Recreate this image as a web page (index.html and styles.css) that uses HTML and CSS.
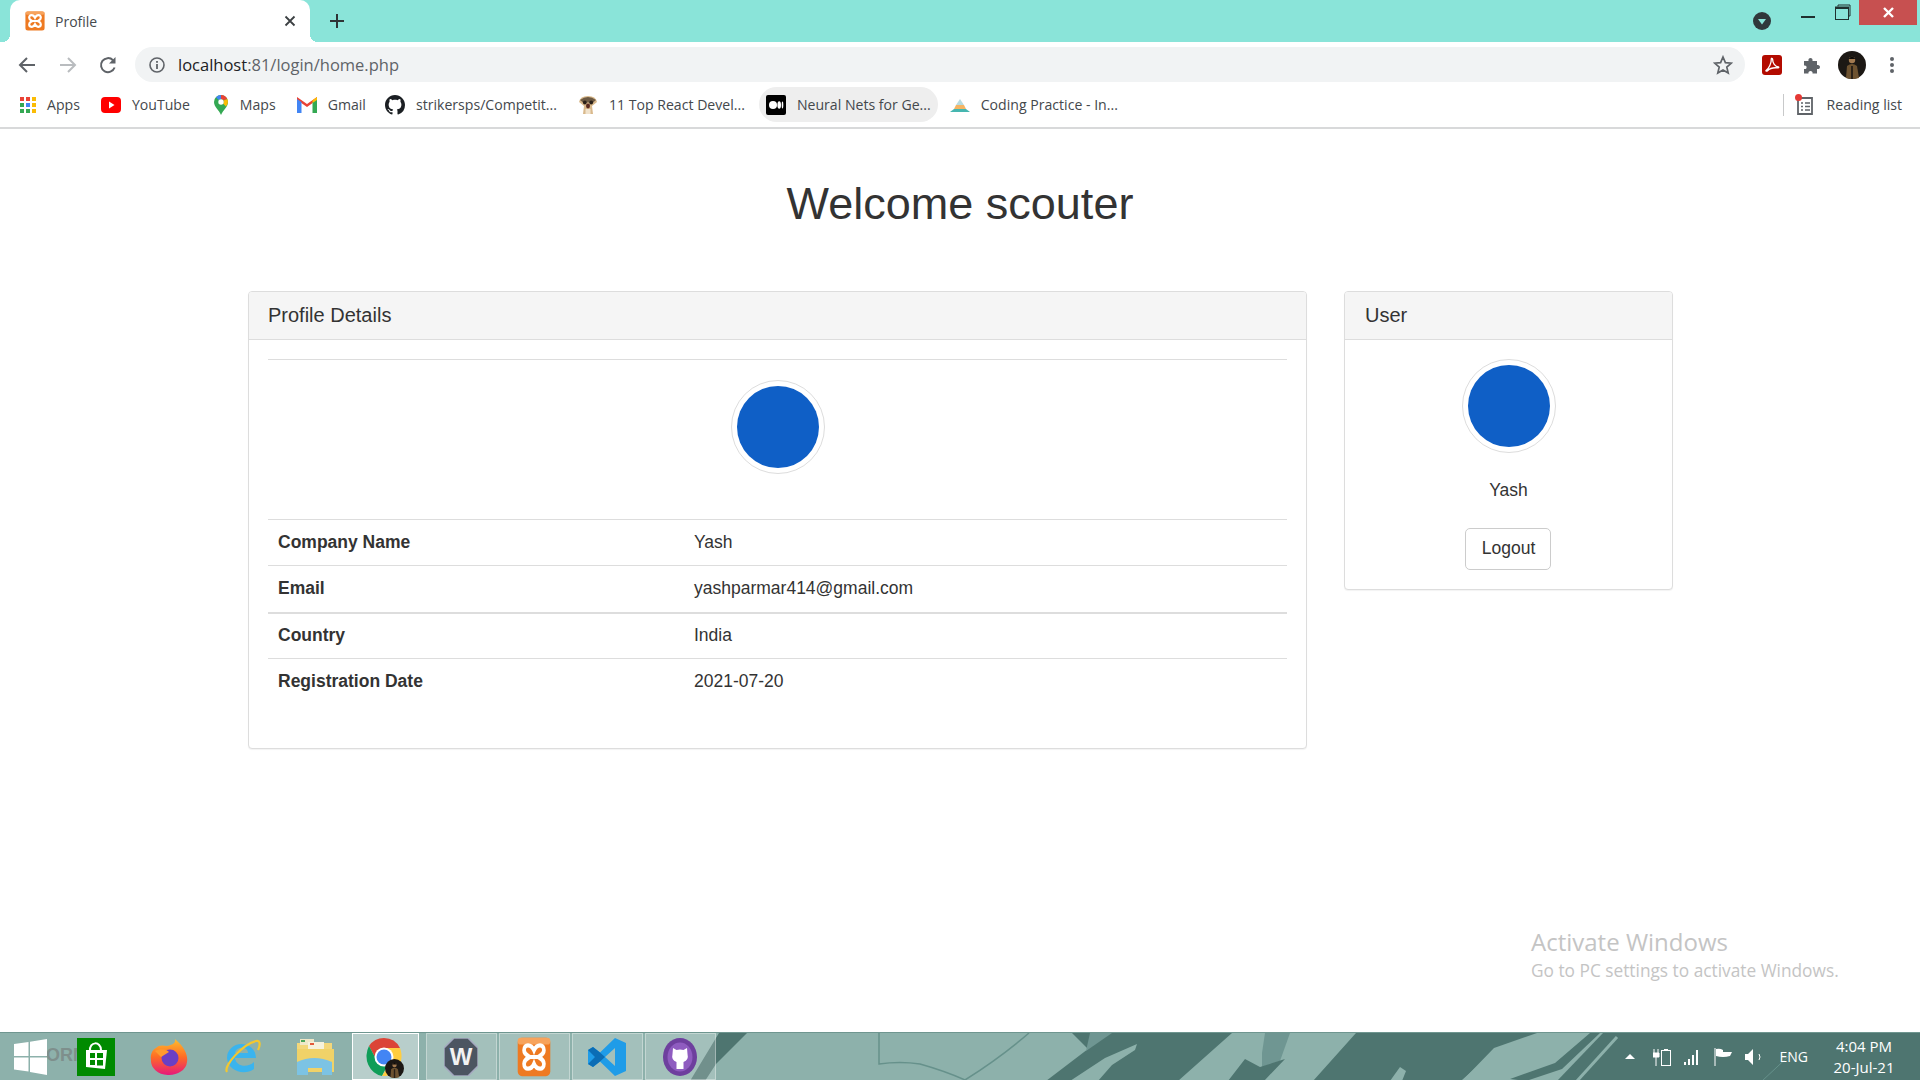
FILE: index.html
```html
<!DOCTYPE html>
<html lang="en">
<head>
    <meta charset="UTF-8">
    <meta name="viewport" content="width=device-width, initial-scale=1.0">
    <title>Profile</title>
    <link rel="stylesheet" href="styles.css">
</head>
<body>
    <svg class="defs" width="0" height="0">
        <symbol id="xampp" viewBox="0 0 24 24">
            <rect x="0.5" y="0.5" width="23" height="23" rx="3" fill="#ee7a22"/>
            <rect x="0.5" y="0.5" width="23" height="4" rx="2" fill="#f7a35c"/>
            <path d="M12 8 C10 4 5 4 5 8 C5 10.5 7 11 9 12 C7 13 5 13.5 5 16 C5 20 10 20 12 16 C14 20 19 20 19 16 C19 13.5 17 13 15 12 C17 11 19 10.5 19 8 C19 4 14 4 12 8 Z" fill="none" stroke="#fff" stroke-width="2.6"/>
            <rect x="9" y="10.8" width="6" height="2.4" fill="#fff"/>
        </symbol>
        <symbol id="portrait" viewBox="0 0 28 28">
            <circle cx="14" cy="14" r="14" fill="#1c1814"/>
            <path d="M8 27 L9 15 Q14 11 19 15 L21 27 Q14 29 8 27 Z" fill="#6d5230"/>
            <path d="M13 15 L15 15 L15 28 L13 28 Z" fill="#2a2118"/>
            <circle cx="14" cy="9" r="3.200" fill="#a27a50"/>
            <path d="M10.500 8 Q14 3 17.500 8 Z" fill="#0e0b08"/>
        </symbol>
    </svg>

    <header class="chrome">
        <div class="tabstrip">
            <div class="tab">
                <svg class="favicon" width="20" height="20"><use href="#xampp"/></svg>
                <span class="tab-title">Profile</span>
                <svg class="tab-close" width="12" height="12" viewBox="0 0 12 12"><path d="M1.5 1.5 L10.5 10.5 M10.5 1.5 L1.5 10.5" stroke="#3c4043" stroke-width="1.8"/></svg>
            </div>
            <svg class="new-tab" width="16" height="16" viewBox="0 0 16 16"><path d="M8 1 V15 M1 8 H15" stroke="#2e3436" stroke-width="2"/></svg>
            <svg class="tab-search" width="18" height="18" viewBox="0 0 18 18"><circle cx="9" cy="9" r="9" fill="#30383b"/><path d="M5 7 H13 L9 12.5 Z" fill="#8ae4d9"/></svg>
            <div class="win-controls">
                <svg class="win-btn" width="14" height="4" viewBox="0 0 14 4"><rect y="1" width="14" height="2" fill="#20302f"/></svg>
                <svg class="win-btn win-restore" width="16" height="16" viewBox="0 0 16 16"><path d="M3 2.5 V1 H15 V12 H13.5" fill="none" stroke="#20302f"/><rect x="0.5" y="3" width="13" height="12.5" fill="none" stroke="#20302f"/><rect x="1" y="3" width="12" height="2" fill="#20302f"/></svg>
                <div class="win-close">
                    <svg width="11" height="11" viewBox="0 0 11 11"><path d="M1 1 L10 10 M10 1 L1 10" stroke="#fff" stroke-width="2.4"/></svg>
                </div>
            </div>
        </div>

        <div class="toolbar">
            <svg class="nav-btn" width="18" height="18" viewBox="0 0 18 18"><path d="M17 9 H2.5 M9 2 L2 9 L9 16" fill="none" stroke="#5f6368" stroke-width="2"/></svg>
            <svg class="nav-btn" width="18" height="18" viewBox="0 0 18 18"><path d="M1 9 H15.5 M9 2 L16 9 L9 16" fill="none" stroke="#b9bcbf" stroke-width="2"/></svg>
            <svg class="nav-btn nav-reload" width="18" height="18" viewBox="0 0 18 18"><path d="M15.6 11.5 A7 7 0 1 1 14 4.2" fill="none" stroke="#5f6368" stroke-width="2"/><path d="M16.5 1 V7.5 H10 Z" fill="#5f6368"/></svg>
            <div class="omnibox">
                <svg class="info" width="16" height="16" viewBox="0 0 16 16"><circle cx="8" cy="8" r="7" fill="none" stroke="#5f6368" stroke-width="1.6"/><rect x="7.1" y="7" width="1.8" height="5" fill="#5f6368"/><rect x="7.1" y="4" width="1.8" height="1.8" fill="#5f6368"/></svg>
                <span class="url"><span class="url-host">localhost</span>:81/login/home.php</span>
                <svg class="star" width="20" height="20" viewBox="0 0 20 20"><path d="M10 2 L12.4 7.6 L18.4 8.1 L13.8 12.1 L15.2 18 L10 14.9 L4.8 18 L6.2 12.1 L1.6 8.1 L7.6 7.6 Z" fill="none" stroke="#5f6368" stroke-width="1.7"/></svg>
            </div>
            <svg class="ext-pdf" width="20" height="20" viewBox="0 0 20 20"><rect width="20" height="20" rx="3" fill="#b30b00"/><path d="M4 15.5 C7 13.5 9.5 8 9.3 4 C9.2 3 10.6 3 10.6 4.2 C10.6 8 13 11.5 16.5 12 C17 12.1 16.8 13 16 12.9 C12 12.4 8 13 5.5 15.8 C4.7 16.6 3.6 16 4 15.5 Z" fill="none" stroke="#fff" stroke-width="1.3"/></svg>
            <svg class="ext-puzzle" width="20" height="20" viewBox="0 0 20 20"><path d="M2 6 H6.5 C5.5 2 11.5 2 10.5 6 H15 V10 C19 9 19 15 15 14 V18.5 H10.5 C11.5 15 5.5 15 6.5 18.5 H2 V14 C5.5 15 5.5 9.500 2 10.500 Z" fill="#5f6368"/></svg>
            <svg class="profile-pic" width="28" height="28"><use href="#portrait"/></svg>
            <svg class="menu-dots" width="4" height="18" viewBox="0 0 4 18"><circle cx="2" cy="3" r="2" fill="#5f6368"/><circle cx="2" cy="9" r="2" fill="#5f6368"/><circle cx="2" cy="15" r="2" fill="#5f6368"/></svg>
        </div>

        <nav class="bookmarks">
            <a class="bookmark">
                <svg width="16" height="16" viewBox="0 0 16 16">
                    <rect x="0" y="0" width="4" height="4" fill="#ea4335"/><rect x="6" y="0" width="4" height="4" fill="#ea4335"/><rect x="12" y="0" width="4" height="4" fill="#fbbc05"/>
                    <rect x="0" y="6" width="4" height="4" fill="#34a853"/><rect x="6" y="6" width="4" height="4" fill="#4285f4"/><rect x="12" y="6" width="4" height="4" fill="#fbbc05"/>
                    <rect x="0" y="12" width="4" height="4" fill="#34a853"/><rect x="6" y="12" width="4" height="4" fill="#34a853"/><rect x="12" y="12" width="4" height="4" fill="#fbbc05"/>
                </svg>
                Apps
            </a>
            <a class="bookmark">
                <svg width="20" height="16" viewBox="0 0 20 16"><rect width="20" height="16" rx="4" fill="#f00"/><path d="M8 4.500 L13.500 8 L8 11.500 Z" fill="#fff"/></svg>
                YouTube
            </a>
            <a class="bookmark bookmark-maps">
                <svg width="16" height="20" viewBox="0 0 16 20"><path d="M8 20 C6 15 1 12 1 7 A7 7 0 0 1 15 7 C15 12 10 15 8 20 Z" fill="#34a853"/><path d="M3 2.200 A7 7 0 0 1 8 0 L8 4 A3 3 0 0 0 5.700 5 Z" fill="#4285f4"/><path d="M8 0 A7 7 0 0 1 14.300 4 L10.500 5.500 A3 3 0 0 0 8 4 Z" fill="#ea4335"/><path d="M14.300 4 A7 7 0 0 1 13 11.500 L10 8.500 A3 3 0 0 0 10.500 5.500 Z" fill="#fbbc05"/><circle cx="8" cy="7" r="2.700" fill="#fff"/></svg>
                Maps
            </a>
            <a class="bookmark bookmark-gmail">
                <svg width="20" height="16" viewBox="0 0 20 16"><path d="M0 3 L10 10 L20 3 V0 L10 7 L0 0 Z" fill="#ea4335"/><path d="M0 2 V16 H4.500 V5 Z" fill="#4285f4"/><path d="M20 2 V16 H15.500 V5 Z" fill="#34a853"/><path d="M20 0 L15.500 3.200 V6 L20 3 Z" fill="#fbbc05"/></svg>
                Gmail
            </a>
            <a class="bookmark">
                <svg width="20" height="20" viewBox="0 0 16 16"><path d="M8 0C3.580 0 0 3.580 0 8c0 3.540 2.290 6.530 5.470 7.590.4.070.55-.17.55-.38 0-.19-.01-.82-.01-1.490-2.010.37-2.530-.49-2.690-.94-.09-.23-.48-.94-.82-1.130-.28-.15-.68-.52-.01-.53.63-.01 1.080.58 1.230.82.720 1.210 1.870.870 2.330.660.070-.520.280-.870.510-1.070-1.780-.2-3.640-.89-3.640-3.950 0-.870.310-1.590.820-2.150-.080-.2-.360-1.020.080-2.120 0 0 .670-.210 2.200.820.640-.180 1.320-.270 2-.270s1.360.090 2 .270c1.530-1.040 2.200-.820 2.200-.820.440 1.100.160 1.920.080 2.120.510.560.820 1.270.820 2.150 0 3.070-1.870 3.750-3.650 3.950.290.250.540.730.540 1.480 0 1.070-.010 1.930-.010 2.200 0 .210.150.460.550.380A8.010 8.010 0 0 0 16 8c0-4.420-3.580-8-8-8z" fill="#1b1f23"/></svg>
                strikersps/Competit...
            </a>
            <a class="bookmark">
                <svg width="20" height="20" viewBox="0 0 20 20"><path d="M5 19 L6 11 L1 7 Q2 1 10 1 Q18 1 19 7 L14 11 L15 19 Z" fill="#d9b98c"/><path d="M2 5 Q10 -1 18 5 L15 7.500 H5 Z" fill="#6d5a43"/><circle cx="6.800" cy="7.500" r="1.900" fill="#2a211a"/><circle cx="13.200" cy="7.500" r="1.900" fill="#2a211a"/><ellipse cx="10" cy="11" rx="2" ry="2.400" fill="#5a2a20"/><path d="M7.500 19 V14 H12.500 V19 Z" fill="#f1e3cd"/></svg>
                11 Top React Devel...
            </a>
            <a class="bookmark bookmark-active">
                <svg width="20" height="20" viewBox="0 0 20 20"><rect width="20" height="20" rx="2" fill="#000"/><ellipse cx="7" cy="10" rx="4" ry="4" fill="#fff"/><ellipse cx="13.200" cy="10" rx="1.800" ry="3.800" fill="#fff"/><ellipse cx="16.500" cy="10" rx="0.800" ry="3.400" fill="#fff"/></svg>
                Neural Nets for Ge...
            </a>
            <a class="bookmark">
                <svg width="20" height="16" viewBox="0 0 20 16"><path d="M10 2 L14 8 H6 Z" fill="#b9dbe0"/><path d="M6 8 H14 L16 12 H4 Z" fill="#f5b563"/><path d="M4 12 H16 L20 15 H0 Z" fill="#46b6b0"/></svg>
                Coding Practice - In...
            </a>
            <div class="reading-list">
                <svg width="20" height="22" viewBox="0 0 20 22"><path d="M3 4 H17 V20 H3 Z" fill="none" stroke="#5f6368" stroke-width="1.800"/><path d="M6 9 H8 M10 9 H15 M6 12.500 H8 M10 12.500 H15 M6 16 H8 M10 16 H15" stroke="#5f6368" stroke-width="1.500"/><circle cx="3.500" cy="3.500" r="3.500" fill="#e53935"/></svg>
                Reading list
            </div>
        </nav>
    </header>

    <main class="page">
        <h1 class="welcome">Welcome scouter</h1>
        <div class="panels">
            <section class="panel panel-profile">
                <div class="panel-heading">Profile Details</div>
                <div class="panel-body">
                    <hr class="rule">
                    <div class="avatar avatar-profile"><div class="avatar-fill"></div></div>
                    <table class="details">
                        <tr><th>Company Name</th><td>Yash</td></tr>
                        <tr class="row-email"><th>Email</th><td>yashparmar414@gmail.com</td></tr>
                        <tr class="row-thick"><th>Country</th><td>India</td></tr>
                        <tr><th>Registration Date</th><td>2021-07-20</td></tr>
                    </table>
                </div>
            </section>
            <section class="panel panel-user">
                <div class="panel-heading">User</div>
                <div class="panel-body user-body">
                    <div class="avatar"><div class="avatar-fill"></div></div>
                    <div class="user-name">Yash</div>
                    <button class="btn-logout">Logout</button>
                </div>
            </section>
        </div>
        <div class="activate">
            <div class="activate-title">Activate Windows</div>
            <div class="activate-sub">Go to PC settings to activate Windows.</div>
        </div>
    </main>

    <footer class="taskbar">
        <svg class="wallpaper" width="1920" height="48" viewBox="0 0 1920 48" preserveAspectRatio="none">
            <polygon points="719,0 747,0 716,31 705,48 690,48" fill="#4e7570"/>
            <path d="M879 0 L879 31 Q900 28 920 31 Q945 38 965 47 Q1000 25 1029 0" fill="none" stroke="#66918b" stroke-width="1.500"/>
            <polygon points="1072,0 1232,0 1178,48 1046,48 1088,16" fill="#4e7570"/>
            <polygon points="1090,0 1112,0 1086,18" fill="#6f9692"/>
            <polygon points="1137,11 1135,17 1112,32 1098,48 1070,48 1105,25" fill="#8db1ab"/>
            <polygon points="1265,0 1290,0 1280,28 1262,34 1262,20" fill="#6f9692"/>
            <polygon points="1245,26 1260,34 1285,26 1264,48 1228,48" fill="#4e7570"/>
            <polygon points="1356,0 1537,0 1494,15 1462,48 1313,48" fill="#4e7570"/>
            <polygon points="1400,34 1406,38 1402,48 1390,48" fill="#8db1ab"/>
            <polygon points="1603,0 1920,0 1920,48 1557,48" fill="#4e7570"/>
            <polygon points="1510,46 1555,30 1590,0 1600,0 1562,36 1526,48" fill="#4e7570"/>
            <path d="M1463 48 L1500 15" stroke="#8db1ab" stroke-width="3"/>
            <path d="M1577 48 L1617 4" stroke="#8db1ab" stroke-width="3"/>
            <path d="M1762 48 L1792 20" stroke="#66918b" stroke-width="1"/>
        </svg>
        <span class="ghost-text">ORM</span>
        <svg class="start-logo" width="33" height="36" viewBox="0 0 33 36"><path d="M0 5 L14.500 3 V17 H0 Z M16 2.800 L33 0 V17 H16 Z M0 18.500 H14.500 V32.500 L0 30.500 Z M16 18.500 H33 V36 L16 33 Z" fill="#fff"/></svg>
        <svg class="store" width="38" height="38" viewBox="0 0 38 38"><rect width="38" height="38" fill="#008a00"/><path d="M9 12 H30 L28 31 L9 29 Z" fill="#fff"/><path d="M13 13 C12 3 24 3 24 12" fill="none" stroke="#fff" stroke-width="2"/><path d="M13 15 H18 V20 H13 Z M20 15 H26 V20 H20 Z M13 22 H18 V27 H13 Z M20 22 H26 V27.500 H20 Z" fill="#008a00"/></svg>
        <svg class="tb-firefox" width="38" height="38" viewBox="0 0 38 38">
            <defs>
                <linearGradient id="fxg" x1="0" y1="0" x2="0" y2="1"><stop offset="0" stop-color="#ffbd2e"/><stop offset="0.5" stop-color="#ff6b24"/><stop offset="1" stop-color="#e5197c"/></linearGradient>
            </defs>
            <path d="M25 1 C36 10 38 19 37 24 A18 14 0 0 1 1 22 C0 16 3 11 6 10 C8 7 13 7 17 8 C21 7 26 6 25 1 Z" fill="url(#fxg)"/>
            <circle cx="20" cy="20" r="8.500" fill="#6a3fc4"/>
            <path d="M5 13 C10 10 17 11 19 14 L11 19 Z" fill="#ff9a2e"/>
        </svg>
        <svg class="tb-ie" width="38" height="38" viewBox="0 0 38 38">
            <path d="M4 20 A14.500 14 0 0 1 33 20 H12 C13 29 25 30 31 24 V31 C21 38 5 33 4 20 Z M12 15 H25 C25 8 13 8 12 15 Z" fill="#3ab4ee" fill-rule="evenodd"/>
            <path d="M4 34 C0 28 20 6 33 3 C38 2 37 8 35 12" fill="none" stroke="#f3c72e" stroke-width="2.200"/>
        </svg>
        <svg class="tb-explorer" width="38" height="38" viewBox="0 0 38 38">
            <path d="M1 5 H36 V34 H1 Z" fill="#f3d77a"/>
            <path d="M4 1 H18 V7 H4 Z" fill="#efe8c8"/><rect x="12" y="4" width="16" height="7" fill="#f6f2dc"/><rect x="14" y="5" width="4" height="2" fill="#e25a3a"/><rect x="5" y="2" width="4" height="2" fill="#4ca85a"/>
            <path d="M1 11 H38 V34 H1 Z" fill="#f0d268"/>
            <path d="M1 24 Q18 16 36 24 V37 H26 V30 H12 V37 H1 Z" fill="#7cc3e4"/>
        </svg>
        <div class="tb-btn tb-btn-active">
            <svg width="38" height="42" viewBox="0 0 38 42">
                <path d="M18 2 A18 18 0 0 1 34 12 H18 Z" fill="#db4437"/><path d="M18 2 A18 18 0 0 0 3 10 L10 23 L18 12 Z" fill="#db4437"/>
                <path d="M3 10 A18 20 0 0 0 16 40 L22 28 L10 23 Z" fill="#0f9d58"/>
                <path d="M34 12 A18 20 0 0 1 16 40 L26 24 L18 12 Z" fill="#ffcd40"/>
                <circle cx="18" cy="21" r="9.500" fill="#fff"/><circle cx="18" cy="21" r="7.500" fill="#4285f4"/>
                <use href="#portrait" x="19" y="23" width="19" height="19"/>
            </svg>
        </div>
        <div class="tb-btn">
            <svg width="34" height="38" viewBox="0 0 34 38"><path d="M10 0 H24 L34 10 V28 L24 38 H10 L0 28 V10 Z" fill="#4c5561" stroke="#a4a8bf" stroke-width="1.500"/><text x="17" y="27" text-anchor="middle" class="wamp-w">W</text></svg>
        </div>
        <div class="tb-btn">
            <svg width="34" height="40" viewBox="0 0 24 24" preserveAspectRatio="none"><use href="#xampp"/></svg>
        </div>
        <div class="tb-btn">
            <svg width="38" height="38" viewBox="0 0 38 38"><path d="M27 0 L38 5 V33 L27 38 L12 23.500 L5 29 L0 26 V12 L5 9 L12 14.500 Z M27 10 L17 19 L27 28 Z" fill="#1f9ce8" fill-rule="evenodd"/><path d="M12 14.500 L5 9 L0 12 L7 19 L0 26 L5 29 L12 23.500 L17 19 Z" fill="#0b6db5"/></svg>
        </div>
        <div class="tb-btn">
            <svg width="34" height="38" viewBox="0 0 34 38"><ellipse cx="17" cy="19" rx="17" ry="19" fill="#6e3f9e"/><ellipse cx="17" cy="19" rx="12.500" ry="14.500" fill="#8f5cc0"/><path d="M10 10 L13.500 12 Q17 11 20.500 12 L24 10 L24.500 16 Q26 22 20.500 24 V31 H13.500 V24 Q8 22 9.500 16 Z" fill="#fff"/></svg>
        </div>

        <div class="tray">
            <svg class="tray-arrow" width="10" height="5" viewBox="0 0 10 5"><path d="M0 5 L5 0 L10 5 Z" fill="#fff"/></svg>
            <svg class="tray-power" width="18" height="18" viewBox="0 0 18 18"><path d="M1 1 V5 M5 1 V5 M0 5 H6 V9 H0 Z M3 9 V18" stroke="#fff" fill="#fff" stroke-width="1"/><rect x="8.500" y="2.500" width="9" height="15" fill="none" stroke="#fff"/><rect x="11" y="1" width="4" height="2" fill="#fff"/></svg>
            <svg class="tray-signal" width="16" height="16" viewBox="0 0 16 16"><rect x="0" y="13" width="2" height="3" fill="#fff"/><rect x="4" y="10" width="2" height="6" fill="#fff"/><rect x="8" y="6" width="2" height="10" fill="#fff"/><rect x="12" y="1" width="2" height="15" fill="#fff"/></svg>
            <svg class="tray-flag" width="18" height="18" viewBox="0 0 18 18"><path d="M1 0 V18" stroke="#fff"/><path d="M2 1 Q6 0 9 2 V4 L18 4 L16 8 Q9 10 2 8 Z" fill="#fff"/></svg>
            <svg class="tray-sound" width="18" height="18" viewBox="0 0 18 18"><path d="M0 6 H3 L8 1 V17 L3 12 H0 Z" fill="#fff"/><path d="M14 6 Q16 9 14 12" fill="none" stroke="#fff"/></svg>
            <span class="tray-lang">ENG</span>
            <div class="clock">
                <div>4:04 PM</div>
                <div>20-Jul-21</div>
            </div>
        </div>
    </footer>
</body>
</html>
```

FILE: styles.css
```css
* {
    box-sizing: border-box;
}

html, body {
    height: 100%;
}

body {
    margin: 0;
    display: flex;
    flex-direction: column;
    height: 1080px;
    overflow: hidden;
    font-family: "Liberation Sans", Arial, sans-serif;
    color: #333;
    background-color: #fff;
}

.defs {
    position: absolute;
}

/* browser top */
.chrome {
    font-family: "Open Sans", "Noto Sans", sans-serif;
    border-bottom: 2px solid #d8d9da;
}

.tabstrip {
    display: flex;
    align-items: flex-start;
    height: 42px;
    background-color: #8ae4d9;
    padding-left: 10px;
}

.tab {
    position: relative;
    display: flex;
    align-items: center;
    width: 300px;
    height: 42px;
    padding-left: 15px;
    background-color: #fff;
    border-radius: 10px 10px 0 0;
}

/* little flares at the foot of the active tab */
.tab::before, .tab::after {
    content: "";
    position: absolute;
    bottom: 0;
    width: 8px;
    height: 8px;
}

.tab::before {
    left: -8px;
    background: radial-gradient(circle at 0 0, transparent 8px, #fff 8px);
}

.tab::after {
    right: -8px;
    background: radial-gradient(circle at 100% 0, transparent 8px, #fff 8px);
}

.tab-title {
    margin-left: 10px;
    font-size: 14px;
    color: #45494d;
}

.tab-close {
    margin-left: auto;
    margin-right: 14px;
}

.new-tab {
    margin-left: 19px;
    margin-top: 13px;
}

.tab-search {
    margin-left: auto;
    margin-top: 12px;
}

.win-controls {
    display: flex;
    margin-left: 30px;
    margin-right: 3px;
}

.win-btn {
    margin-top: 15px;
}

.win-restore {
    margin-top: 4px;
    margin-left: 20px;
}

.win-close {
    display: flex;
    align-items: center;
    justify-content: center;
    width: 58px;
    height: 25px;
    margin-left: 8px;
    background-color: #c75050;
}

.toolbar {
    display: flex;
    align-items: center;
    height: 45px;
    padding: 0 0 0 18px;
    background-color: #fff;
}

.nav-btn {
    margin-right: 23px;
}

.nav-reload {
    margin-left: -1px;
    margin-right: 24px;
}

.omnibox {
    display: flex;
    align-items: center;
    width: 1610px;
    height: 35px;
    margin-left: -6px;
    padding: 0 12px 0 14px;
    background-color: #f1f3f4;
    border-radius: 18px;
}

.url {
    margin-left: 13px;
    font-size: 16.500px;
    color: #5f6368;
}

.url-host {
    color: #202124;
}

.star {
    margin-left: auto;
}

.ext-pdf {
    margin-left: 17px;
}

.ext-puzzle {
    margin-left: 20px;
}

.profile-pic {
    margin-left: 16px;
}

.menu-dots {
    margin-left: 24px;
}

.bookmarks {
    display: flex;
    align-items: center;
    height: 40px;
    padding: 0 18px 5px 13px;
    font-size: 14.100px;
    color: #44484c;
    background-color: #fff;
}

.bookmark {
    display: flex;
    align-items: center;
    gap: 11px;
    height: 35px;
    padding: 0 7px;
    margin-right: 7px;
    white-space: nowrap;
    border-radius: 18px;
}

.bookmark-maps {
    padding-left: 9px;
}

.bookmark-gmail {
    margin-right: 5px;
}

.bookmark-active {
    margin-right: 5px;
    background-color: #eeeeee;
}

.reading-list {
    display: flex;
    align-items: center;
    gap: 12px;
    margin-left: auto;
    padding-left: 11px;
    height: 22px;
    border-left: 1px solid #c8c9ca;
}

/* page */
.page {
    flex: 1;
    position: relative;
}

.welcome {
    margin: 0;
    padding-top: 49px;
    height: 162px;
    text-align: center;
    font-size: 45px;
    font-weight: 400;
    line-height: 52px;
    color: #333;
}

.panels {
    display: flex;
    align-items: flex-start;
    gap: 37px;
    padding-left: 248px;
}

.panel {
    background-color: #fff;
    border: 1px solid #ddd;
    border-radius: 4px;
    box-shadow: 0 1px 1px rgba(0, 0, 0, .05);
}

.panel-profile {
    width: 1059px;
    height: 458px;
}

.panel-user {
    width: 329px;
    height: 299px;
}

.panel-heading {
    height: 48px;
    padding: 0 19px;
    font-size: 20px;
    line-height: 46px;
    background-color: #f5f5f5;
    border-bottom: 1px solid #ddd;
    border-radius: 3px 3px 0 0;
}

.panel-user .panel-heading {
    padding: 0 20px;
}

.panel-body {
    padding: 19px 19px 0;
}

.rule {
    margin: 0;
    border: 0;
    border-top: 1px solid #ddd;
}

.avatar {
    display: block;
    width: 94px;
    height: 94px;
    padding: 5px;
    background-color: #fff;
    border: 1px solid #ddd;
    border-radius: 50%;
}

.avatar-profile {
    margin: 20px auto 45px;
}

.avatar-fill {
    width: 100%;
    height: 100%;
    background-color: #0f5fc6;
    border-radius: 50%;
}

.details {
    width: 100%;
    table-layout: fixed;
    border-collapse: collapse;
    font-size: 17.5px;
}

.details th, .details td {
    height: 46px;
    padding: 0 10px;
    text-align: left;
    border-top: 1px solid #ddd;
}

.details th {
    width: 416px;
    font-weight: 700;
}

.row-email th, .row-email td {
    height: 47px;
}

.row-thick th, .row-thick td {
    border-top: 2px solid #ddd;
}

.user-body {
    display: flex;
    flex-direction: column;
    align-items: center;
}

.user-name {
    margin-top: 26px;
    font-size: 17.5px;
    line-height: 22px;
}

.btn-logout {
    width: 86px;
    height: 42px;
    margin-top: 27px;
    margin-right: 2px;
    padding: 0 0 2px 2px;
    font-family: inherit;
    font-size: 17.5px;
    color: #333;
    background-color: #fff;
    border: 1px solid #ccc;
    border-radius: 5px;
}

.activate {
    position: absolute;
    left: 1531px;
    top: 796px;
    font-family: "Open Sans", "Noto Sans", sans-serif;
    color: #c4c4c4;
}

.activate-title {
    font-size: 24px;
    line-height: 33px;
}

.activate-sub {
    font-size: 17.300px;
    line-height: 26px;
}

/* windows taskbar */
.taskbar {
    position: relative;
    display: flex;
    align-items: center;
    flex: none;
    height: 48px;
    padding-left: 14px;
    background-color: #8db1ab;
    border-top: 1px solid #6f9690;
}

.taskbar .wallpaper {
    position: absolute;
    left: 0;
    top: 0;
}

.ghost-text {
    position: absolute;
    left: 46px;
    top: 12px;
    font-size: 18px;
    font-weight: 700;
    color: #7e8f8c;
}

.store, .tb-firefox, .tb-ie, .tb-explorer, .start-logo, .tb-btn, .tray {
    position: relative;
}

.store {
    margin-left: 30px;
}

.tb-firefox {
    margin-left: 35px;
}

.tb-ie {
    margin-left: 35px;
}

.tb-explorer {
    margin-left: 35px;
}

.tb-btn {
    display: flex;
    align-items: center;
    justify-content: center;
    width: 71px;
    height: 47px;
    margin-left: 2px;
    background-color: rgba(255, 255, 255, .2);
    border: 1px solid rgba(255, 255, 255, .35);
}

.tb-btn svg {
    margin-left: -2px;
}

.tb-btn-active {
    width: 67px;
    margin-left: 18px;
    margin-right: 5px;
    background-color: rgba(255, 255, 255, .38);
    border: 1px solid #fff;
}

.wamp-w {
    font-family: "Liberation Sans", sans-serif;
    font-size: 24px;
    font-weight: 700;
    fill: #f2f2f2;
}

.tray {
    display: flex;
    align-items: center;
    margin-left: auto;
    color: #fff;
    font-family: "Open Sans", "Noto Sans", sans-serif;
    font-size: 14px;
}

.tray-power {
    margin-left: 18px;
}

.tray-signal {
    margin-left: 13px;
}

.tray-flag {
    margin-left: 14px;
}

.tray-sound {
    margin-left: 13px;
}

.tray-lang {
    margin-left: 17px;
}

.clock {
    width: 74px;
    margin-left: 19px;
    margin-right: 19px;
    text-align: center;
    line-height: 21px;
    font-size: 15px;
}
```
